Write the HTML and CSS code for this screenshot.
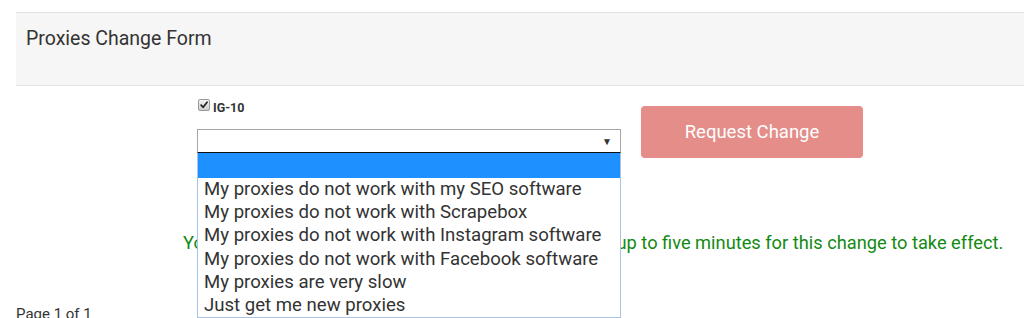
FILE: index.html
```html
<!DOCTYPE html>
<html lang="en">
<head>
  <meta charset="UTF-8">
  <title>Proxies Change Form</title>
  <link rel="stylesheet" href="styles.css">
</head>
<body>

<div class="panel">
  <h3>Proxies Change Form</h3>
</div>

<div class="content">
  <div class="form-row">
    <div class="field">
      <label class="check">
        <span class="box">
          <svg width="11" height="11" viewBox="0 0 11 11"><path d="M2.3 5.6 L4.5 8 L8.9 2.4" fill="none" stroke="#222" stroke-width="1.9" stroke-linecap="round" stroke-linejoin="round"/></svg>
        </span>
        IG-10
      </label>
      <div class="select-wrap">
        <div class="select"><span class="arrow">&#9660;</span></div>
        <ul class="options">
          <li class="active"></li>
          <li>My proxies do not work with my SEO software</li>
          <li>My proxies do not work with Scrapebox</li>
          <li>My proxies do not work with Instagram software</li>
          <li>My proxies do not work with Facebook software</li>
          <li>My proxies are very slow</li>
          <li>Just get me new proxies</li>
        </ul>
      </div>
    </div>
    <button class="btn">Request Change</button>
  </div>

  <p class="notice">Your change request has been received. Please allow up to five minutes for this change to take effect.</p>

  <div class="pager">Page 1 of 1</div>
</div>

</body>
</html>
```

FILE: styles.css
```css
* {
  box-sizing: border-box;
}

body {
  margin: 0;
  font-family: Roboto, "Liberation Sans", sans-serif;
  color: #333;
  background: #fff;
  overflow: hidden;
}

.panel {
  margin: 12px 0 0 16px;
  height: 74px;
  background: #f6f6f6;
  border-top: 1px solid #e3e3e3;
  border-bottom: 1px solid #e3e3e3;
  padding: 14px 10px;
}

.panel h3 {
  margin: 0;
  font-size: 19.5px;
  font-weight: 400;
  line-height: 24px;
  color: #333;
}

.content {
  padding-left: 16px;
}

.form-row {
  display: flex;
  align-items: flex-start;
  margin-top: 13px;
  padding-left: 181px;
}

.field {
  width: 424px;
}

.check {
  display: flex;
  align-items: center;
  height: 16px;
  font-size: 12.5px;
  font-weight: 700;
  color: #333;
  margin: 0 0 14px 1px;
}

.box {
  display: inline-flex;
  width: 12px;
  height: 12px;
  margin-right: 3px;
  border-radius: 2px;
  background: linear-gradient(#f2f2f2, #cdcdcd);
  border: 1px solid #9a9a9a;
  align-items: center;
  justify-content: center;
  margin-top: -5px;
}

.box svg {
  width: 10px;
  height: 10px;
}

.select-wrap {
  position: relative;
}

.select {
  height: 24px;
  border: 1px solid #a6a6a6;
  border-bottom: none;
  background: #fff;
  display: flex;
  justify-content: flex-end;
  align-items: center;
  padding-right: 8px;
}

.arrow {
  font-size: 10px;
  color: #333;
}

.options {
  position: absolute;
  top: 23px;
  left: 0;
  width: 424px;
  margin: 0;
  padding: 0;
  list-style: none;
  background: #fff;
  border: 1px solid #a9c1e2;
  border-top: 1px solid #111;
  z-index: 5;
}

.options li {
  height: 23.2px;
  line-height: 23.2px;
  padding-left: 6px;
  font-size: 18.6px;
  color: #333;
  white-space: nowrap;
}

.options li.active {
  height: 25px;
  background: #1e90ff;
}

.btn {
  margin: 7px 0 0 20px;
  width: 222px;
  height: 52px;
  border: none;
  border-radius: 4px;
  background: #e48d89;
  color: #fff;
  font-family: Roboto, "Liberation Sans", sans-serif;
  font-size: 18.5px;
}

.notice {
  margin: 0;
  padding-left: 167px;
  margin-top: 74px;
  font-size: 18.25px;
  line-height: 22px;
  color: #128a12;
  white-space: nowrap;
}

.pager {
  margin-top: 51px;
  font-size: 15px;
  color: #333;
}
```
